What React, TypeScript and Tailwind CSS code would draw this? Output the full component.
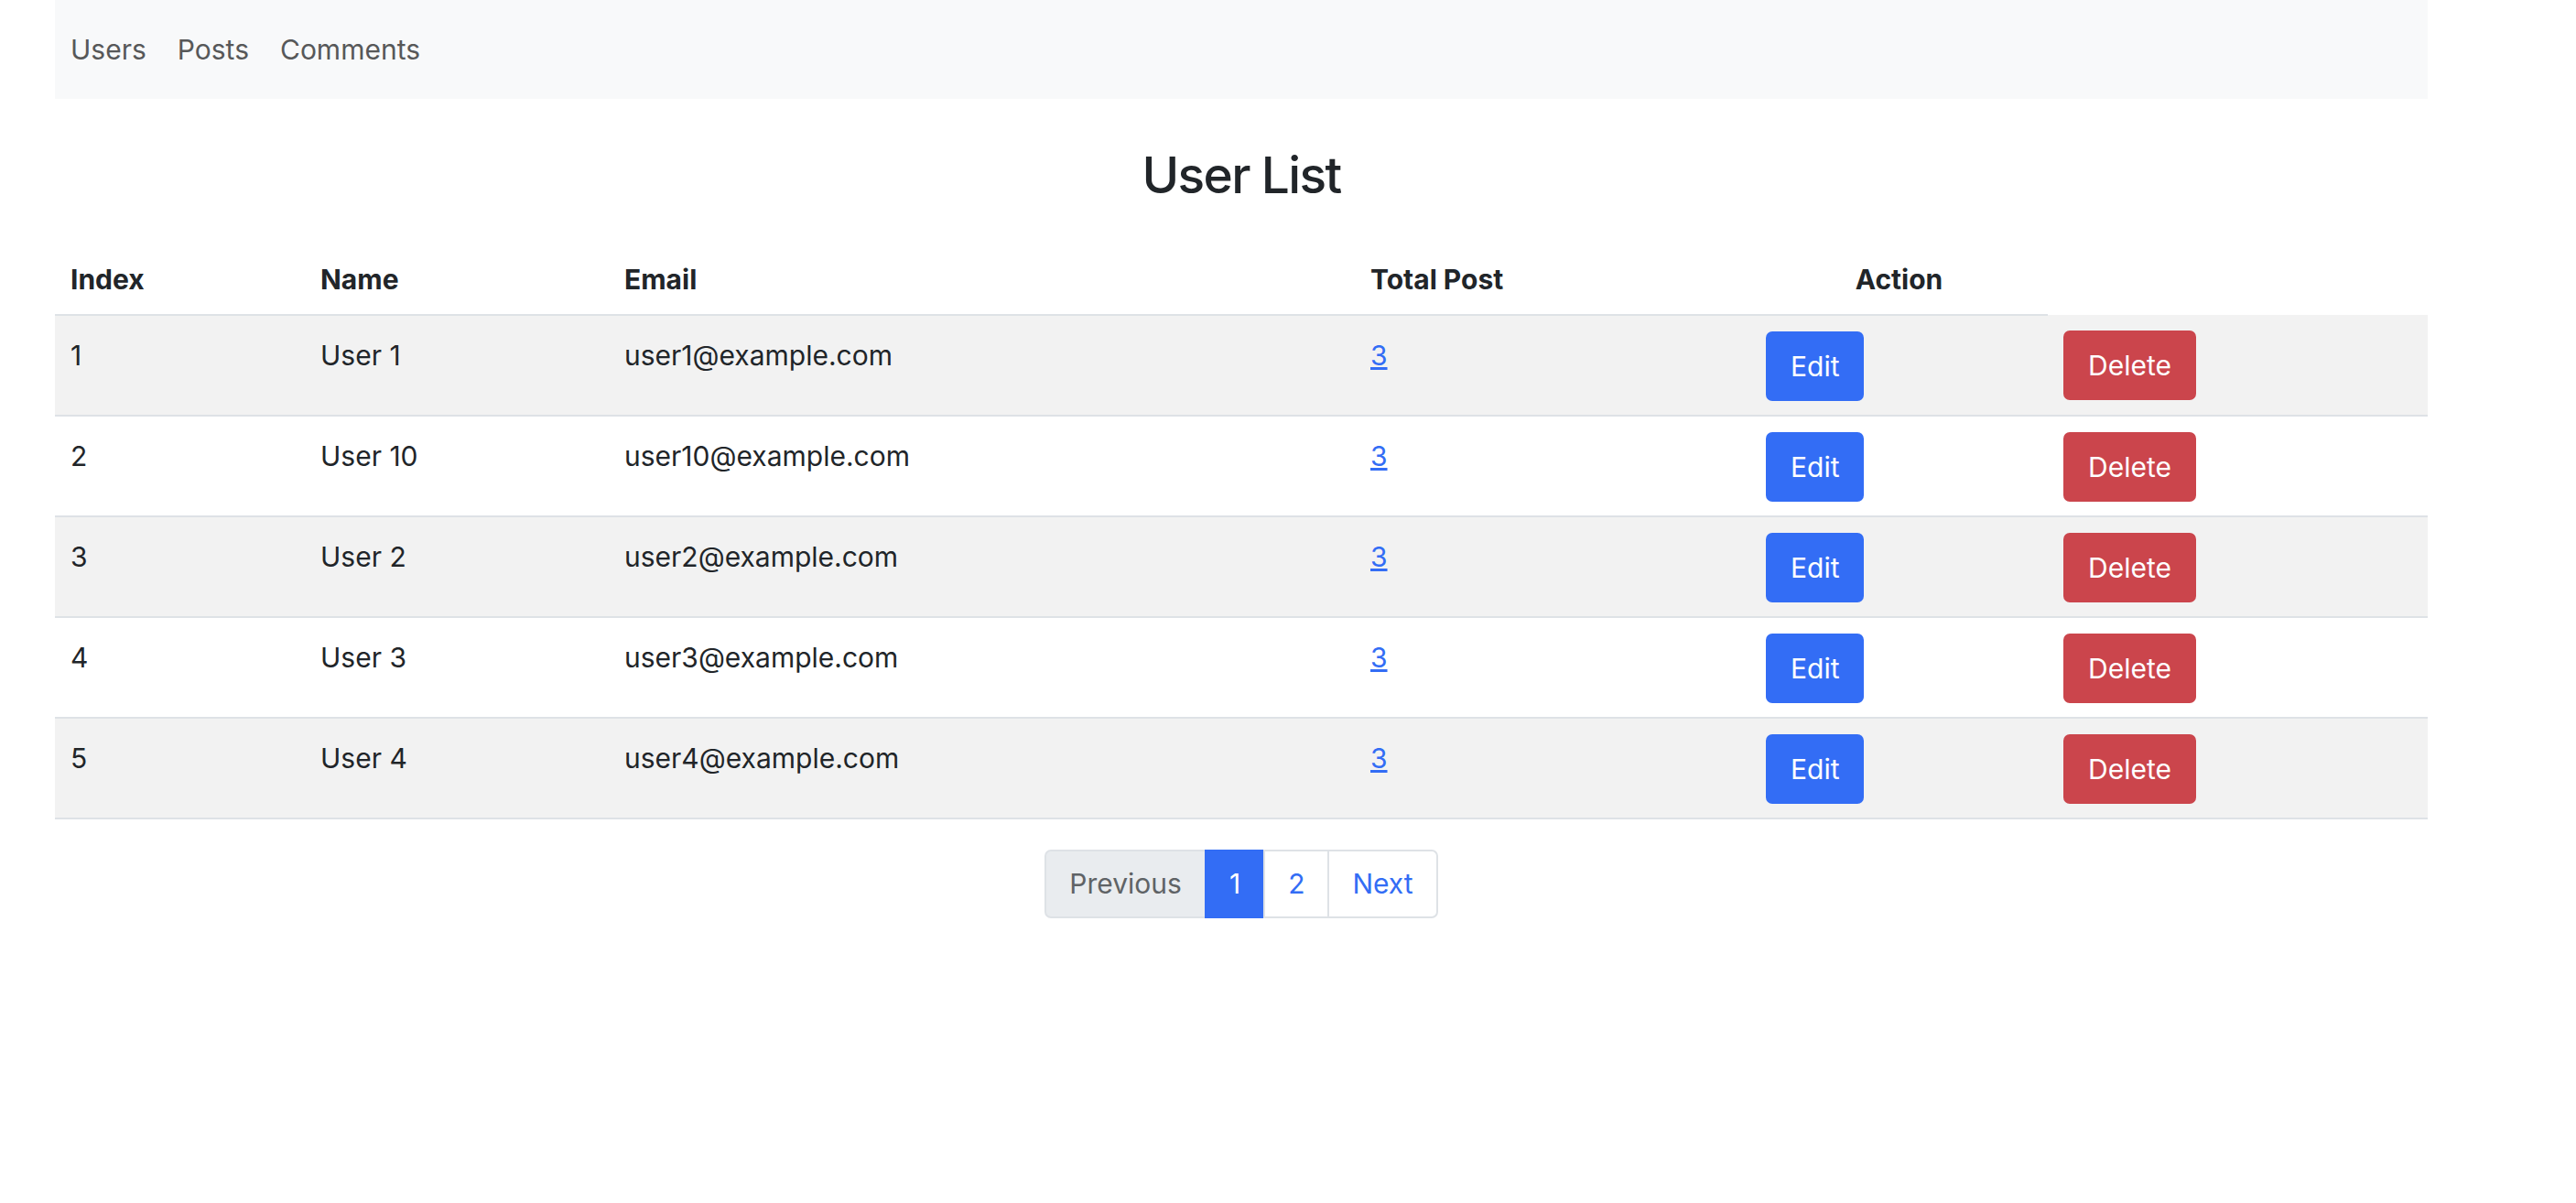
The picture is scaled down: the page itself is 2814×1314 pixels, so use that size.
import React from "react";

const users = [
  { i: 1, name: "User 1", email: "user1@example.com", posts: 3 },
  { i: 2, name: "User 10", email: "user10@example.com", posts: 3 },
  { i: 3, name: "User 2", email: "user2@example.com", posts: 3 },
  { i: 4, name: "User 3", email: "user3@example.com", posts: 3 },
  { i: 5, name: "User 4", email: "user4@example.com", posts: 3 },
];

export default function App() {
  return (
    <div className="min-h-screen w-full bg-white font-[Inter,'Noto_Sans',sans-serif] text-[#212529]">
      <div className="ml-[60px] w-[2592px]">
        <nav className="flex h-[108px] items-center gap-[34px] bg-[#f8f9fa] px-[17px] text-[30px] leading-[45px] text-[#575859]">
          <a href="#">Users</a>
          <a href="#">Posts</a>
          <a href="#">Comments</a>
        </nav>

        <h2 className="mt-[50px] text-center text-[55px] font-medium leading-[67px] tracking-[-0.03em]">User List</h2>

        <table className="mt-[39px] w-full table-fixed border-collapse text-[30px]">
          <colgroup>
            <col className="w-[273px]" />
            <col className="w-[332px]" />
            <col className="w-[815px]" />
            <col className="w-[432px]" />
            <col className="w-[325px]" />
            <col className="w-[415px]" />
          </colgroup>
          <thead>
            <tr>
              <th className="border-b-2 border-[#dee2e6] px-[17px] pt-[19px] pb-[15px] text-left font-bold leading-[45px]">Index</th>
              <th className="border-b-2 border-[#dee2e6] px-[17px] pt-[19px] pb-[15px] text-left font-bold leading-[45px]">Name</th>
              <th className="border-b-2 border-[#dee2e6] px-[17px] pt-[19px] pb-[15px] text-left font-bold leading-[45px]">Email</th>
              <th className="border-b-2 border-[#dee2e6] px-[17px] pt-[19px] pb-[15px] text-left font-bold leading-[45px]">Total Post</th>
              <th className="border-b-2 border-[#dee2e6] px-[17px] pt-[19px] pb-[15px] text-center font-bold leading-[45px]">Action</th>
            </tr>
          </thead>
          <tbody>
            {users.map((u, idx) => (
              <tr key={u.i} className={idx % 2 === 0 ? "bg-[#f2f2f2]" : "bg-white"}>
                <td className="border-b-2 border-[#dee2e6] px-[17px] pt-[17px] pb-[15px] align-top leading-[52px]">{u.i}</td>
                <td className="border-b-2 border-[#dee2e6] px-[17px] pt-[17px] pb-[15px] align-top leading-[52px]">{u.name}</td>
                <td className="border-b-2 border-[#dee2e6] px-[17px] pt-[17px] pb-[15px] align-top leading-[52px]">{u.email}</td>
                <td className="border-b-2 border-[#dee2e6] px-[17px] pt-[17px] pb-[15px] align-top leading-[52px]">
                  <a href="#" className="text-[#336df5] underline">{u.posts}</a>
                </td>
                <td className="border-b-2 border-[#dee2e6] px-[17px] pt-[17px] pb-[15px] align-top">
                  <button className="flex h-[76px] w-fit items-center rounded-[7px] bg-[#336df5] px-[27px] leading-[45px] text-white">Edit</button>
                </td>
                <td className="border-b-2 border-[#dee2e6] px-[17px] pt-[17px] pb-[15px] align-top">
                  <button className="flex h-[76px] w-fit items-center rounded-[7px] bg-[#cb454c] px-[27px] leading-[45px] text-white">Delete</button>
                </td>
              </tr>
            ))}
          </tbody>
        </table>

        <div className="mt-[33px] flex justify-center">
          <ul className="flex text-[30px] leading-[45px]">
            <li>
              <span className="block rounded-l-[7px] border-2 border-[#dee2e6] bg-[#e9ecef] px-[25px] py-[13px] text-[#5f6366]">Previous</span>
            </li>
            <li>
              <a href="#" className="-ml-[2px] block border-2 border-[#336df5] bg-[#336df5] px-[25px] py-[13px] text-white">1</a>
            </li>
            <li>
              <a href="#" className="-ml-[2px] block border-2 border-[#dee2e6] bg-white px-[25px] py-[13px] text-[#336df5]">2</a>
            </li>
            <li>
              <a href="#" className="-ml-[2px] block rounded-r-[7px] border-2 border-[#dee2e6] bg-white px-[25px] py-[13px] text-[#336df5]">Next</a>
            </li>
          </ul>
        </div>
      </div>
    </div>
  );
}
